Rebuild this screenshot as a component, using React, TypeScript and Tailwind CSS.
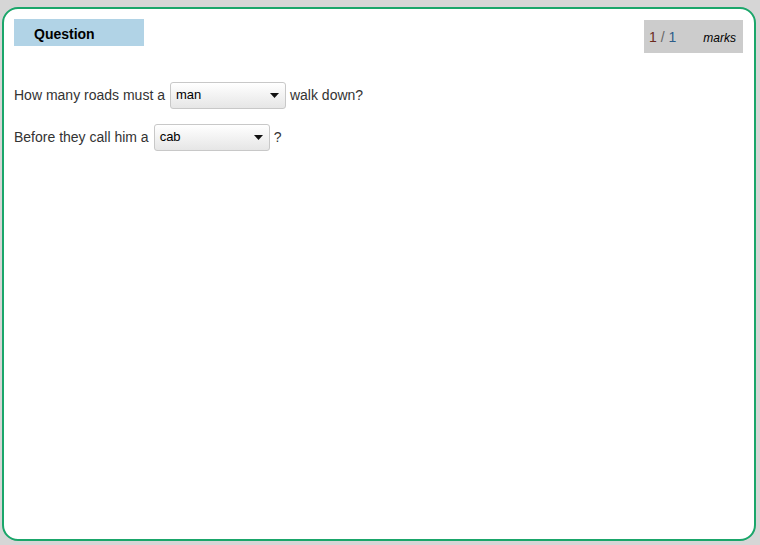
export default function App() {
  return (
    <div className="w-[760px] h-[545px] bg-[#d6d6d6] pt-[7px] pl-[2px] pr-[4px] pb-[4px] font-['Liberation_Sans',Arial,sans-serif]">
      <div className="h-[534px] bg-white border-2 border-[#1aa66a] rounded-[16px] relative">
        <div className="flex items-start justify-between pl-[10px] pr-[11px] pt-[10px]">
          <div className="w-[130px] h-[27px] bg-[#b1d3e6] pl-[20px] pt-[3px] flex items-center text-[14px] font-bold text-black">
            Question
          </div>
          <div className="w-[99px] h-[33px] mt-[1px] bg-[#cccccc] flex items-center pl-[5px] pr-[7px] pt-[2px] justify-between">
            <span className="text-[14px]">
              <span className="text-[#6b2b1e]">1</span>
              <span className="text-[#666]"> / </span>
              <span className="text-[#2d5d8a]">1</span>
            </span>
            <span className="text-[12px] italic text-black">marks</span>
          </div>
        </div>
        <div className="pl-[10px] pt-[28px] text-[14px] text-[#333] flex flex-col gap-[15px]">
          <div className="flex items-center gap-[5px] h-[27px] pt-[1px]">
            <span>How many roads must a</span>
            <Select value="man" />
            <span className="-ml-[1px]">walk down?</span>
          </div>
          <div className="flex items-center gap-[5px] h-[27px] pt-[1px]">
            <span>Before they call him a</span>
            <Select value="cab" />
            <span className="-ml-[1px]">?</span>
          </div>
        </div>
      </div>
    </div>
  )
}

function Select({ value }: { value: string }) {
  return (
    <div className="w-[116px] h-[27px] rounded-[3px] border border-[#c8c8c8] bg-gradient-to-b from-white to-[#e6e6e6] flex items-center justify-between pl-[5px] pr-[6px] text-[13px] text-black">
      <span>{value}</span>
      <svg width="9" height="5" viewBox="0 0 9 5">
        <path d="M0 0 L9 0 L4.5 5 Z" fill="#111" />
      </svg>
    </div>
  )
}
